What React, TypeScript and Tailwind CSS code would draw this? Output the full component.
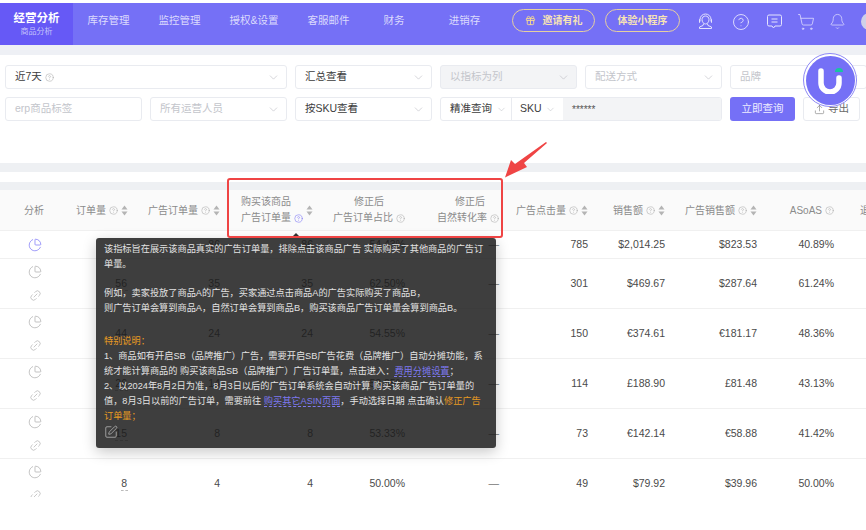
import React from "react";
import { ChevronDown, CircleHelp, Bell, ShoppingCart, ChartPie, Link2, Upload, SquarePen, Gift } from "lucide-react";

const font = '"Liberation Sans", "Noto Sans CJK SC", sans-serif';

function Help({ className = "text-[#a8a8a8]" }: { className?: string }) {
  return <CircleHelp size={9} strokeWidth={1.4} className={`shrink-0 ${className}`} />;
}

function Sort() {
  return (
    <svg width="7" height="11" viewBox="0 0 7 11" className="shrink-0">
      <path d="M3.5 0.5 L6.5 4.5 H0.5Z" fill="#b4b4b4" />
      <path d="M3.5 10.5 L6.5 6.5 H0.5Z" fill="#b4b4b4" />
    </svg>
  );
}

function Select({ label, muted, disabled, help, className = "" }: { label: string; muted?: boolean; disabled?: boolean; help?: boolean; className?: string }) {
  return (
    <div className={`h-[24px] flex items-center justify-between pl-[9px] pr-[6px] rounded-[3px] border border-[#e9ebf0] ${disabled ? "bg-[#f3f4f6]" : "bg-white"} ${className}`}>
      <span className={`flex items-center gap-[3px] text-[10.5px] whitespace-nowrap ${muted ? "text-[#c3c5cb]" : "text-[#3c3c3c]"}`}>
        {label}
        {help && <Help />}
      </span>
      <ChevronDown size={13} strokeWidth={0.9} className="text-[#a9abb2] shrink-0" />
    </div>
  );
}

const navItems = [
  { t: "库存管理", w: "w-[71px]" },
  { t: "监控管理", w: "w-[71px]" },
  { t: "授权&设置", w: "w-[78px]" },
  { t: "客服邮件", w: "w-[71px]" },
  { t: "财务", w: "w-[60px]" },
  { t: "进销存", w: "w-[81px]" },
];

const gridCols = "grid grid-cols-[70px_60px_92px_93px_92px_94px_89px_77px_92px_77px_30px]";

function HeadCell({ children, align = "justify-end" }: { children: React.ReactNode; align?: string }) {
  return <div className={`flex items-center gap-[3px] pr-[2px] text-[10px] text-[#8b8b8b] whitespace-nowrap ${align}`}>{children}</div>;
}

const rows = [
  { h: "h-[28px]", active: true, v: ["", "86", "86", "54.43%", "—", "785", "$2,014.25", "$823.53", "40.89%"] },
  { h: "h-[50px]", v: ["56", "35", "35", "62.50%", "—", "301", "$469.67", "$287.64", "61.24%"] },
  { h: "h-[50px]", v: ["44", "24", "24", "54.55%", "—", "150", "€374.61", "€181.17", "48.36%"] },
  { h: "h-[50px]", v: ["26", "14", "14", "53.85%", "—", "114", "£188.90", "£81.48", "43.13%"] },
  { h: "h-[50px]", v: ["15", "8", "8", "53.33%", "—", "73", "€142.14", "€58.88", "41.42%"] },
  { h: "h-[50px]", v: ["8", "4", "4", "50.00%", "—", "49", "$79.92", "$39.96", "50.00%"] },
];

export default function App() {
  return (
    <div className="relative w-[866px] h-[530px] overflow-hidden bg-white" style={{ fontFamily: font }}>
      <div className="h-[3px] bg-white" />
      {/* nav */}
      <div className="h-[42px] bg-[#7570f6] flex items-stretch text-white">
        <div className="w-[73px] shrink-0 bg-[#6659f6] flex flex-col items-center justify-center">
          <span className="text-[11.5px] leading-[16px] font-bold">经营分析</span>
          <span className="text-[8px] leading-[12px] text-[#c5c2fb]">商品分析</span>
        </div>
        {navItems.map((n) => (
          <div key={n.t} className={`${n.w} shrink-0 flex justify-center pt-[10px] text-[10.5px] leading-[15px] text-[#dcdafd]`}>{n.t}</div>
        ))}
        <div className="ml-[7px] mt-[6px] w-[83px] h-[23px] shrink-0 rounded-full border border-[#e6cfa0] flex items-center justify-center gap-[7px] text-[10px] font-bold text-[#f7e3b5]">
          <Gift size={11} strokeWidth={2} className="text-[#f6d98f]" />
          邀请有礼
        </div>
        <div className="ml-[10px] mt-[6px] w-[75px] h-[23px] shrink-0 rounded-full border border-[#e6cfa0] flex items-center justify-center text-[10px] font-bold text-[#f7e3b5]">
          体验小程序
        </div>
        <div className="ml-[17px] mt-[10px] flex items-start shrink-0 text-[#e4e3fd]">
          <svg width="17" height="17" viewBox="0 0 17 17" fill="none" stroke="currentColor" strokeWidth="1" className="shrink-0">
            <path d="M3 8.5V6.5a5.5 5.5 0 0 1 11 0v2" />
            <path d="M5 6.5c0-2 1.5-3.5 3.5-3.5S12 4.500 12 6.500c0 2.500-1.500 4.500-3.500 4.500S5 9 5 6.500Z" />
            <path d="M3 6.500h-.5v3H3M14 6.500h.5v3H14" />
            <path d="M6.500 11 L6 12.500 L2.500 14 v1.500h12V14L11 12.500 10.500 11" />
          </svg>
          <CircleHelp size={18} strokeWidth={1.2} className="ml-[18px] shrink-0" />
          <svg width="17" height="17" viewBox="0 0 17 16" fill="none" stroke="currentColor" strokeWidth="1" className="ml-[16px] shrink-0">
            <path d="M3 1.500h11a1.500 1.500 0 0 1 1.500 1.500v8a1.500 1.500 0 0 1-1.500 1.500H9l-1.500 2-1.500-2H3A1.500 1.500 0 0 1 1.500 11V3A1.500 1.500 0 0 1 3 1.500Z" />
            <path d="M5.500 5.500h6M5.500 8.500h6" />
          </svg>
          <ShoppingCart size={18} strokeWidth={1} className="ml-[14px] shrink-0" />
          <Bell size={17} strokeWidth={1} className="ml-[14px] shrink-0" />
          <div className="ml-[15px] w-[17px] h-[17px] rounded-full bg-[#cfd0e8] shrink-0" />
        </div>
      </div>
      <div className="h-[10px] bg-[#eef0f5]" />
      {/* filters */}
      <div className="h-[108px] pt-[10px] pl-[5px] flex flex-col gap-[8px]">
        <div className="grid grid-cols-[repeat(6,137px)] gap-x-[8px]">
          <Select label="近7天" help className="col-span-2" />
          <Select label="汇总查看" />
          <Select label="以指标为列" muted disabled />
          <Select label="配送方式" muted />
          <Select label="品牌" muted />
        </div>
        <div className="grid grid-cols-[repeat(6,137px)] gap-x-[8px]">
          <div className="h-[24px] flex items-center pl-[9px] rounded-[3px] border border-[#e9ebf0] text-[10.5px] text-[#c3c5cb]">erp商品标签</div>
          <Select label="所有运营人员" muted />
          <Select label="按SKU查看" />
          <div className="col-span-2 h-[24px] flex rounded-[3px] border border-[#e9ebf0] overflow-hidden text-[10.5px] text-[#3c3c3c]">
            <div className="w-[71px] flex items-center justify-between pl-[9px] pr-[4px] border-r border-[#e9ebf0]">
              <span className="whitespace-nowrap">精准查询</span>
              <ChevronDown size={11} strokeWidth={0.9} className="text-[#a9abb2]" />
            </div>
            <div className="w-[51px] flex items-center gap-[3px] pl-[8px]">
              SKU
              <ChevronDown size={11} strokeWidth={0.9} className="text-[#a9abb2]" />
            </div>
            <div className="flex-1 bg-[#f3f4f6] flex items-center pl-[9px] text-[#555] text-[10px]">******</div>
          </div>
          <div className="col-span-1 flex gap-[8px] items-stretch">
            <div className="w-[65px] h-[24px] shrink-0 rounded-[3px] bg-[#7570f6] text-[#eeedff] text-[10.5px] flex items-center justify-center">立即查询</div>
            <div className="w-[57px] h-[24px] shrink-0 rounded-[3px] border border-[#e9ebf0] text-[#6b6b6b] text-[10.5px] flex items-center justify-center gap-[3px] whitespace-nowrap">
              <Upload size={11} strokeWidth={1.2} />
              导出
            </div>
          </div>
        </div>
      </div>
      <div className="h-[9px] bg-[#eef0f3]" />
      <div className="h-[10px] bg-white" />
      <div className="h-[8px] bg-[#eef0f3]" />
      {/* table head */}
      <div className={`${gridCols} h-[41px] bg-[#fafafa] border-b border-[#f0f0f0]`}>
        <HeadCell align="justify-center">分析</HeadCell>
        <HeadCell>订单量 <Help /> <Sort /></HeadCell>
        <HeadCell>广告订单量 <Help /> <Sort /></HeadCell>
        <HeadCell>
          <div className="flex flex-col leading-[16px]">
            <span>购买该商品</span>
            <span className="flex items-center gap-[3px]">广告订单量 <Help className="text-[#7570f6]" /></span>
          </div>
          <Sort />
        </HeadCell>
        <HeadCell>
          <div className="flex flex-col items-center leading-[16px]">
            <span>修正后</span>
            <span className="flex items-center gap-[3px]">广告订单占比 <Help /></span>
          </div>
        </HeadCell>
        <HeadCell>
          <div className="flex flex-col items-end leading-[16px]">
            <span className="pr-[14px]">修正后</span>
            <span className="flex items-center gap-[3px]">自然转化率 <Help /></span>
          </div>
        </HeadCell>
        <HeadCell>广告点击量 <Help /> <Sort /></HeadCell>
        <HeadCell>销售额 <Help /> <Sort /></HeadCell>
        <HeadCell>广告销售额 <Help /> <Sort /></HeadCell>
        <HeadCell>ASoAS <Help /></HeadCell>
        <HeadCell align="justify-start pl-[24px]">退</HeadCell>
      </div>
      {/* rows */}
      <div className="h-[266px] overflow-hidden">
        {rows.map((r, i) => (
          <div key={i} className={`${gridCols} ${r.h} border-b border-[#f0f0f0] text-[10.5px] text-[#4a4a4a]`}>
            <div className={`flex flex-col items-center justify-center gap-[10px] ${r.active ? "text-[#7570f6]" : "text-[#a9a9a9]"}`}>
              <ChartPie size={14} strokeWidth={1.2} />
              {!r.active && <Link2 size={13} strokeWidth={1.1} className="-rotate-45" />}
            </div>
            {r.v.map((val, j) => (
              <div key={j} className={`flex items-center justify-end pr-[2px] ${j === 4 ? "text-[#777]" : ""}`}>
                <span className={j === 0 && val ? "pr-[1px] border-b border-dashed border-[#bbb] leading-[13px]" : ""}>{val}</span>
              </div>
            ))}
          </div>
        ))}
      </div>

      {/* tooltip */}
      <div className="absolute left-[96px] top-[238px] w-[400px] h-[210px] rounded-[3px] bg-[rgba(28,28,28,0.85)] shadow-[0_4px_14px_rgba(0,0,0,0.22)] pl-[8px] pt-[4px] text-[9.2px] leading-[15px] text-[#e2e2e2] whitespace-nowrap">
        <div>该指标旨在展示该商品真实的广告订单量，排除点击该商品广告 实际购买了其他商品的广告订</div>
        <div>单量。</div>
        <div className="h-[14px]" />
        <div>例如，卖家投放了商品A的广告，买家通过点击商品A的广告实际购买了商品B，</div>
        <div>则广告订单会算到商品A，自然订单会算到商品B，购买该商品广告订单量会算到商品B。</div>
        <div className="h-[18px]" />
        <div className="text-[#e69a22]">特别说明：</div>
        <div>1、商品如有开启SB（品牌推广）广告，需要开启SB广告花费（品牌推广）自动分摊功能，系</div>
        <div>统才能计算商品的 购买该商品SB（品牌推广）广告订单量，点击进入：<span className="text-[#7d78f0] border-b border-dashed border-[#7d78f0]">费用分摊设置</span>；</div>
        <div>2、以2024年8月2日为准，8月3日以后的广告订单系统会自动计算 购买该商品广告订单量的</div>
        <div>值，8月3日以前的广告订单，需要前往 <span className="text-[#7d78f0] border-b border-dashed border-[#7d78f0]">购买其它ASIN页面</span>，手动选择日期 点击确认<span className="text-[#e69a22]">修正广告</span></div>
        <div className="text-[#e69a22]">订单量；</div>
        <SquarePen size={14} strokeWidth={1} className="text-[#dcdcdc] mt-[1px]" />
      </div>
      {/* caret */}
      <div className="absolute left-[291px] top-[233px] w-0 h-0 border-x-[5px] border-x-transparent border-b-[5px] border-b-[#323232]" />

      {/* red highlight */}
      <div className="absolute left-[227px] top-[178px] w-[276px] h-[60px] rounded-[3px] border-2 border-[#ef4444]" />
      <svg className="absolute left-[500px] top-[138px]" width="52" height="44" viewBox="0 0 52 44">
        <path d="M47 5 L24 25 L27 29 L5 39.5 L11 22 L15 26 L46 4Z" fill="#ef4444" />
      </svg>

      {/* floating logo */}
      <div className="absolute left-[803px] top-[53px] w-[54px] h-[54px] rounded-full border border-[#8d88f5] bg-white flex items-center justify-center">
        <div className="w-[49px] h-[49px] rounded-full bg-[#7570f6] flex items-center justify-center">
          <svg width="26" height="28" viewBox="0 0 26 28" fill="none">
            <path d="M4 5 V17 a9 9 0 0 0 18 0 V12" stroke="white" strokeWidth="5.5" strokeLinecap="round" />
            <path d="M18 6 a4 4 0 0 1 8 0Z" fill="#19c4a0" />
          </svg>
        </div>
      </div>
    </div>
  );
}
